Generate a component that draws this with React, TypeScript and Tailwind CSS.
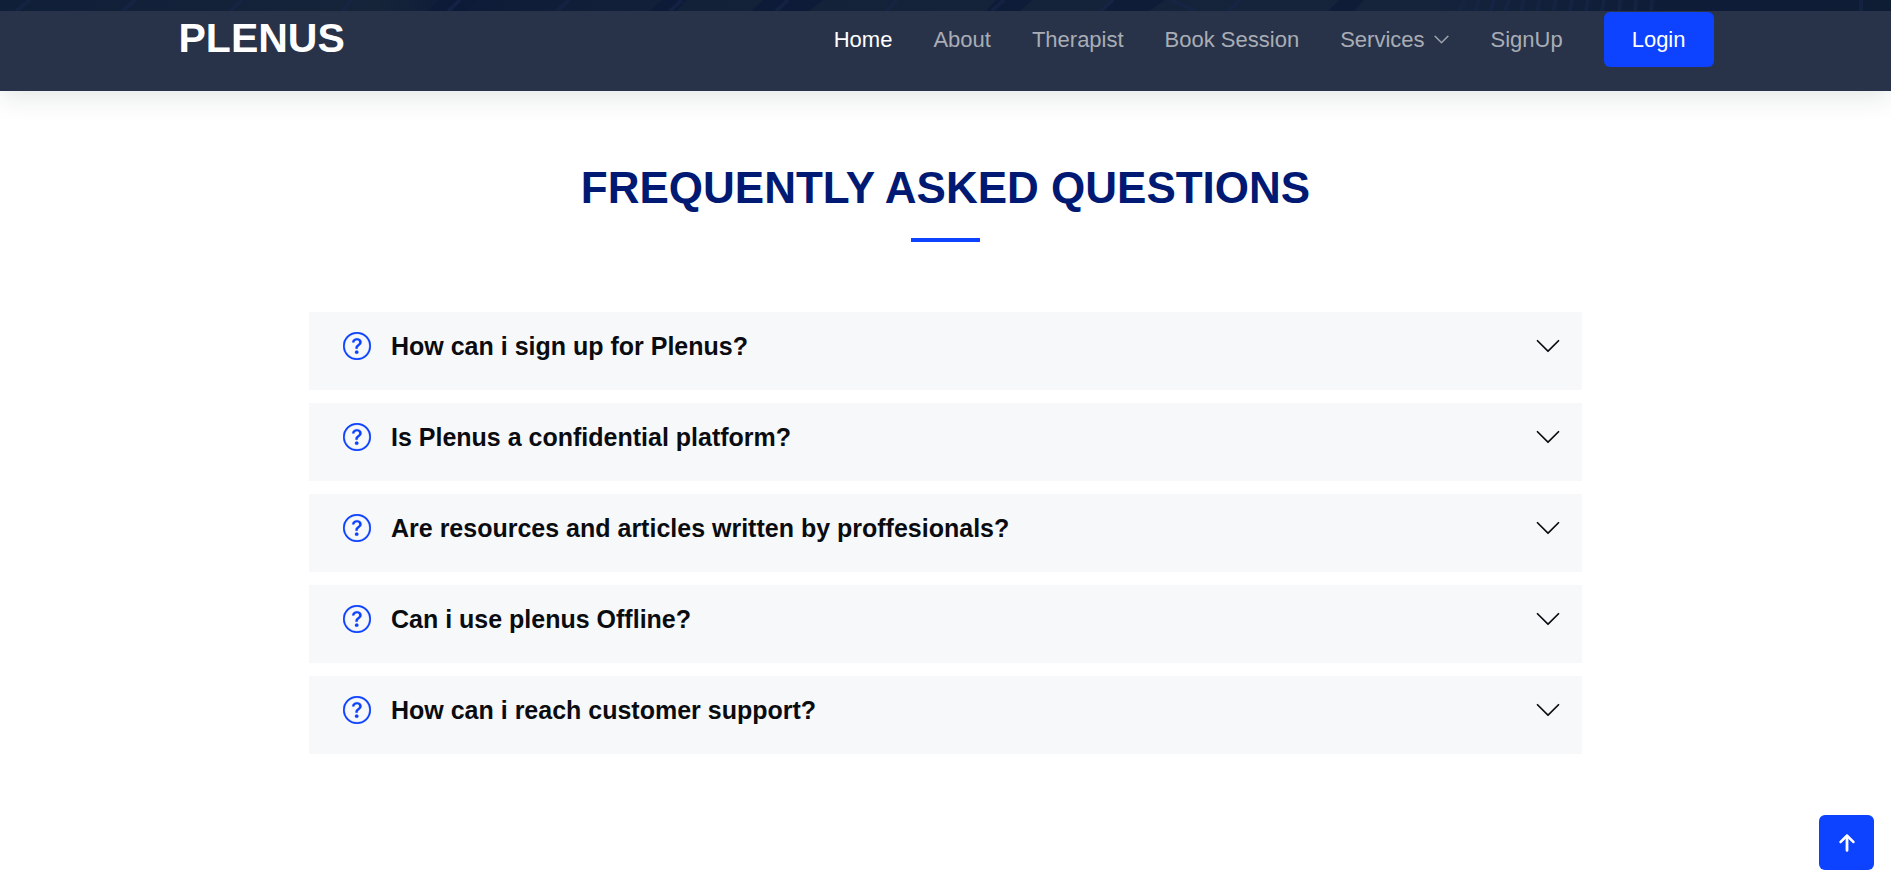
import { useState } from "react";
import { BsArrowUpShort, BsChevronDown, BsQuestionCircle } from "react-icons/bs";

const links = ["About", "Therapist", "Book Session"];

const faqs = [
  { question: "How can i sign up for Plenus?", answer: "Choose SignUp in the menu and fill in your details." },
  { question: "Is Plenus a confidential platform?", answer: "Yes, every session is private." },
  { question: "Are resources and articles written by proffesionals?", answer: "Yes, by licensed therapists." },
  { question: "Can i use plenus Offline?", answer: "Sessions need an internet connection." },
  { question: "How can i reach customer support?", answer: "Write to us from the contact page." },
];

function HeroEdge() {
  return (
    <div className="h-[11px] overflow-hidden bg-[#12203a]">
      <svg className="h-full w-full" viewBox="0 0 1891 11" preserveAspectRatio="none" aria-hidden="true">
        <defs>
          <linearGradient id="edge">
            <stop offset="0" stopColor="#101f38" />
            <stop offset="0.2" stopColor="#152439" />
            <stop offset="0.24" stopColor="#0e1b38" />
            <stop offset="0.4" stopColor="#132238" />
            <stop offset="0.75" stopColor="#15243b" />
            <stop offset="0.88" stopColor="#0e1c38" />
            <stop offset="1" stopColor="#0e1c34" />
          </linearGradient>
        </defs>
        <rect width="1891" height="11" fill="url(#edge)" />
        <g fill="#0d1a38" opacity="0.8">
          <path d="M440 0h36l-10 11h-38zM662 0h24l-10 11h-26zM763 0h60l-14 11h-58zM996 0h36l-12 11h-34zM1115 0h50l-16 11h-46zM1340 0h24l-10 11h-26z" />
        </g>
        <g stroke="#18264a" strokeWidth="4" opacity="0.6">
          <path d="M30 0l-14 11M135 0l-12 11M242 0l-12 11M352 0l-10 11M460 0l-12 11M569 0l-12 11M682 0l-12 11M788 0l-12 11M897 0l-10 11M1004 0l-12 11M1113 0l-12 11M1170 0l26 11M1240 0l-12 11" />
          <path d="M1464 0l-4 11M1479 0l-4 11M1494 0l-4 11M1509 0l-4 11M1524 0l-3 11M1540 0l-3 11M1556 0l-3 11M1572 0l-2 11M1588 0l-2 11M1604 0l-2 11M1620 0l-1 11M1636 0l-1 11M1652 0l-1 11M1861 0v11" />
        </g>
      </svg>
    </div>
  );
}

export default function App() {
  const [open, setOpen] = useState<number | null>(null);

  return (
    <div className="min-h-screen bg-white font-['Liberation_Sans',Arial,sans-serif]">
      <HeroEdge />
      <header className="bg-[#28334a] pb-6 shadow-[0_5px_28px_rgba(1,41,40,0.12)]">
        <div className="mx-auto flex max-w-[1536px] items-start justify-between pt-px">
          <a href="#home" className="pl-px text-[41px] leading-[52px] font-bold text-white">
            PLENUS
          </a>
          <nav className="flex items-center gap-[41px] text-[22px] leading-[55px] text-[#a9adb5]">
            <a href="#home" className="text-white">Home</a>
            {links.map((label) => (
              <a key={label} href={`#${label.toLowerCase().replace(" ", "-")}`}>
                {label}
              </a>
            ))}
            <a href="#services" className="flex items-center gap-2">
              Services
              <BsChevronDown className="size-[17px]" strokeWidth={0.4} aria-hidden="true" />
            </a>
            <a href="#signup">SignUp</a>
            <a href="#login" className="rounded-md bg-[#0d42ff] px-7 text-white">Login</a>
          </nav>
        </div>
      </header>

      <main className="mx-auto max-w-[1273px] pt-[70px] pb-24">
        <h2 className="text-center text-[44px] leading-[54px] font-bold text-[#001973]">
          FREQUENTLY ASKED QUESTIONS
        </h2>
        <div className="mx-auto mt-[23px] h-1 w-[69px] bg-[#0d42ff]" />

        <ul className="mt-[70px] flex flex-col gap-[13px]">
          {faqs.map((faq, i) => (
            <li key={faq.question} className="bg-[#f6f8fa] pt-4 pr-5 pb-[26px] pl-[34px]">
              <button
                type="button"
                aria-expanded={open === i}
                onClick={() => setOpen(open === i ? null : i)}
                className="flex w-full items-center text-left text-[25px] leading-9 font-bold text-[#0b0c10]"
              >
                <BsQuestionCircle className="mr-5 size-7 text-[#0d42ff]" strokeWidth={0.1} aria-hidden="true" />
                <span className="flex-1">{faq.question}</span>
                <BsChevronDown className="size-7" aria-hidden="true" />
              </button>
              {open === i && <p className="pt-3 pl-12 text-[22px]">{faq.answer}</p>}
            </li>
          ))}
        </ul>
      </main>

      <a
        href="#home"
        aria-label="Back to top"
        className="fixed right-[17px] bottom-[7px] flex size-[55px] items-center justify-center rounded-md bg-[#0d42ff] text-white"
      >
        <BsArrowUpShort className="size-[34px]" strokeWidth={0.3} aria-hidden="true" />
      </a>
    </div>
  );
}
